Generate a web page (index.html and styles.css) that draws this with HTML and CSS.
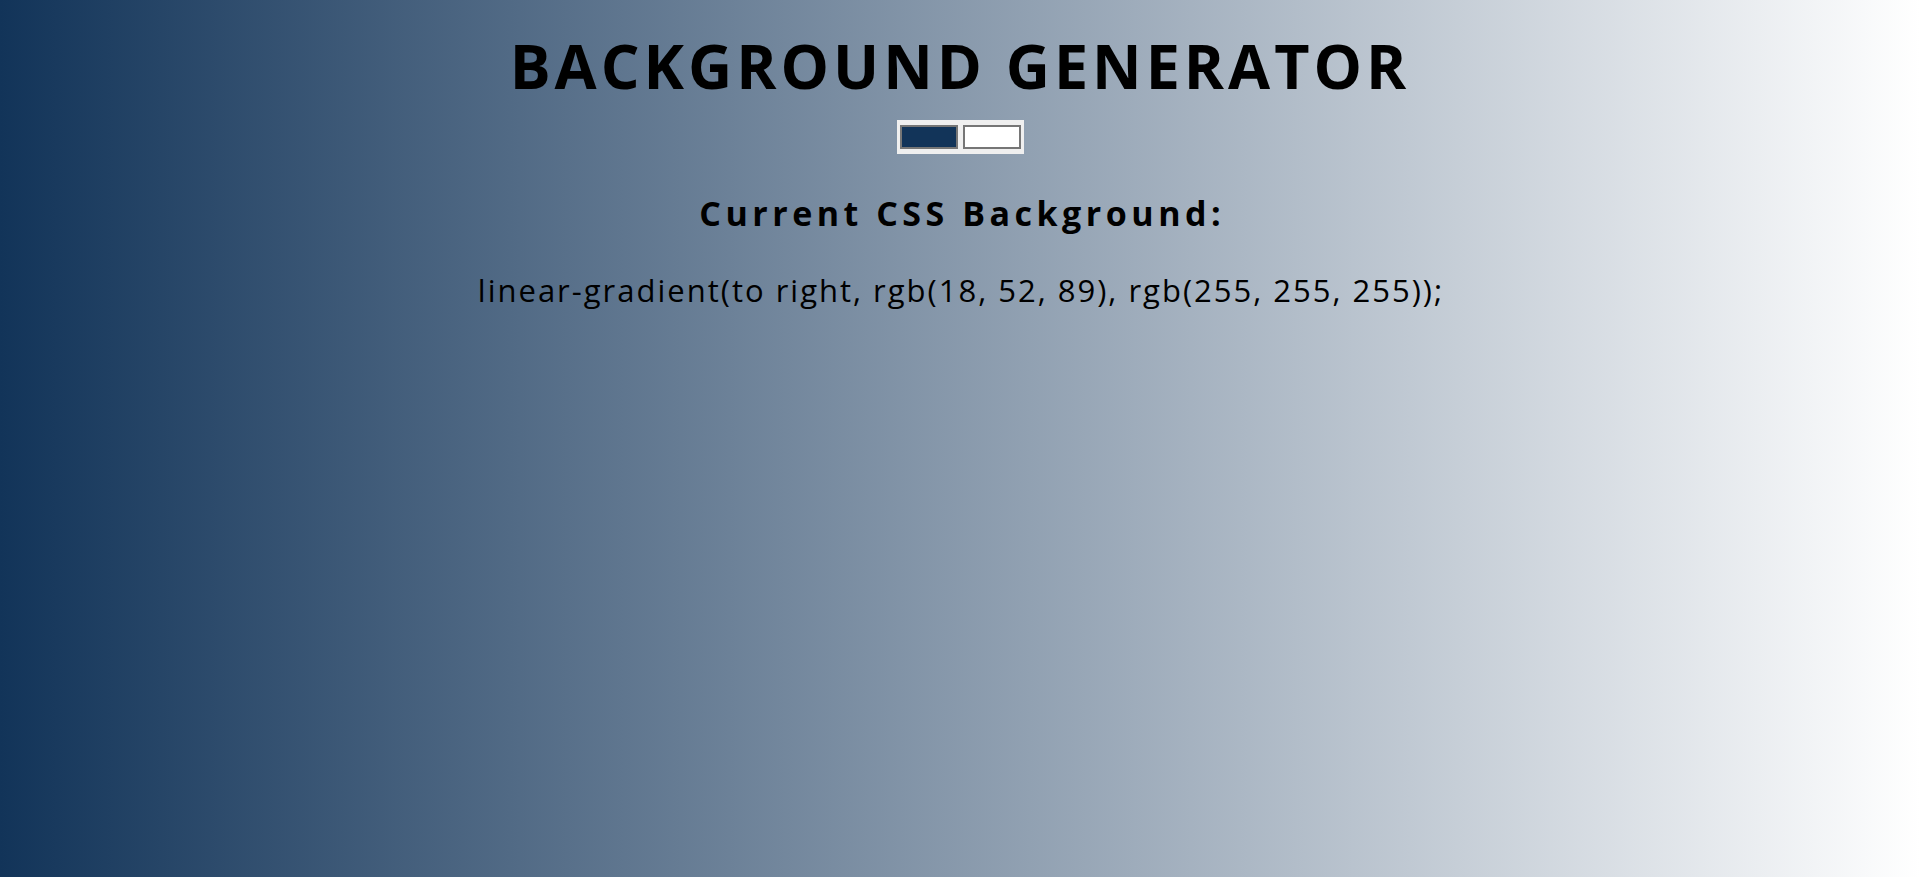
FILE: index.html
```html
<!DOCTYPE html>
<html>
<head>
<meta charset="utf-8">
<title>Background Generator</title>
<link rel="stylesheet" href="styles.css">
</head>
<body>
<main class="page">
  <h1 class="title">BACKGROUND GENERATOR</h1>
  <div class="pickers">
    <span class="swatch swatch-dark"></span>
    <span class="swatch swatch-light"></span>
  </div>
  <h2 class="subtitle">Current CSS Background:</h2>
  <p class="code">linear-gradient(to right, rgb(18, 52, 89), rgb(255, 255, 255));</p>
</main>
</body>
</html>
```

FILE: styles.css
```css
html, body {
  margin: 0;
  padding: 0;
  height: 100%;
}
body {
  background: linear-gradient(to right, rgb(18, 52, 89), rgb(255, 255, 255));
  font-family: "Open Sans", "Noto Sans", sans-serif;
  color: #000;
}
.page {
  display: flex;
  flex-direction: column;
  align-items: center;
  padding-top: 35px;
}
.title {
  margin: 0;
  font-size: 61px;
  line-height: 62px;
  font-weight: 700;
  letter-spacing: 4px;
}
.pickers {
  margin-top: 23px;
  display: flex;
  gap: 5px;
  padding: 5px 3px;
  background: #efefef;
  height: 24px;
}
.swatch {
  display: block;
  width: 54px;
  height: 20px;
  border: 2px solid #767676;
}
.swatch-dark { background: rgb(18, 52, 89); }
.swatch-light { background: #fff; }
.subtitle {
  margin: 39px 0 0;
  font-size: 34px;
  line-height: 40px;
  font-weight: 700;
  letter-spacing: 4.5px;
  text-indent: 4.5px;
}
.code {
  margin: 39px 0 0;
  font-size: 31px;
  line-height: 36px;
  letter-spacing: 2px;
  text-indent: 2px;
}
```
